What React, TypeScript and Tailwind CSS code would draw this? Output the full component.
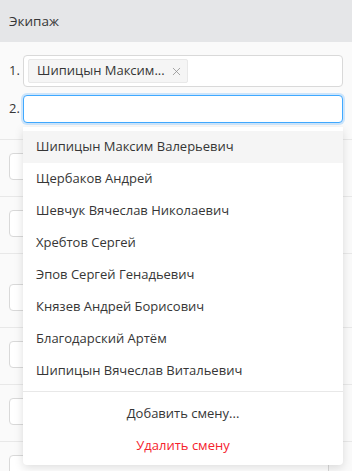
import { X } from 'lucide-react';

const crew = [
  'Шипицын Максим Валерьевич',
  'Щербаков Андрей',
  'Шевчук Вячеслав Николаевич',
  'Хребтов Сергей',
  'Эпов Сергей Генадьевич',
  'Князев Андрей Борисович',
  'Благодарский Артём',
  'Шипицын Вячеслав Витальевич',
];

// строки смен под выпадающим списком
const shifts = [
  { h: 'h-[57px]', pt: 'pt-[13px]' },
  { h: 'h-[57px]', pt: 'pt-[13px]' },
  { h: 'h-[74px]', pt: 'pt-[30px]' },
  { h: 'h-[57px]', pt: 'pt-[13px]' },
  { h: 'h-[57px]', pt: 'pt-[13px]' },
  { h: 'h-[57px]', pt: 'pt-[13px]' },
];

export default function App() {
  return (
    <div
      className="relative w-[352px] h-[471px] overflow-hidden bg-[#fafafa] text-[#363636] text-[13px]"
      style={{ fontFamily: '"Open Sans", "Noto Sans", sans-serif' }}
    >
      <div className="h-[42px] flex items-center px-[9px] bg-[#e5e6e8] text-[13.5px]">Экипаж</div>

      {/* экипаж */}
      <div className="pt-[13px] pb-[16px] pr-[9px] border-b border-[#e8e8e8] flex flex-col gap-[8px]">
        <div className="flex items-center">
          <span className="w-[23px] pl-[9px]">1.</span>
          <div className="flex-1 h-[32px] flex items-center px-[4px] bg-white border border-[#d9d9d9] rounded-[4px]">
            <div className="h-[24px] w-[160px] flex items-center justify-between pl-[8px] pr-[4px] bg-[#f5f5f5] border border-[#e8e8e8] rounded-[2px]">
              <span className="truncate">Шипицын Максим...</span>
              <X size={13} strokeWidth={1.4} className="text-[#8c8c8c] shrink-0" />
            </div>
          </div>
        </div>
        <div className="flex items-center">
          <span className="w-[23px] pl-[9px]">2.</span>
          <div className="flex-1 h-[28px] bg-white border border-[#40a9ff] rounded-[4px] shadow-[0_0_0_2px_rgba(24,144,255,0.2)]" />
        </div>
      </div>

      {shifts.map((s, i) => (
        <div key={i} className={`${s.h} ${s.pt} px-[9px] border-b border-[#e8e8e8]`}>
          <div className="h-[27px] w-[320px] bg-white border border-[#d9d9d9] rounded-[4px]" />
        </div>
      ))}

      {/* выпадающий список */}
      <div className="absolute left-[23px] top-[127px] w-[320px] bg-white rounded-b-[4px] shadow-[0_3px_10px_rgba(0,0,0,0.13)] py-[4px]">
        {crew.map((name, i) => (
          <div
            key={name}
            className={`h-[32px] flex items-center px-[13px] ${i === 0 ? 'bg-[#f5f5f5]' : ''}`}
          >
            {name}
          </div>
        ))}
        <div className="mt-[4px] border-t border-[#e8e8e8] pt-[6px]">
          <div className="h-[32px] flex items-center justify-center">Добавить смену...</div>
          <div className="h-[31px] flex items-center justify-center text-[#f5222d]">Удалить смену</div>
        </div>
      </div>
    </div>
  );
}
